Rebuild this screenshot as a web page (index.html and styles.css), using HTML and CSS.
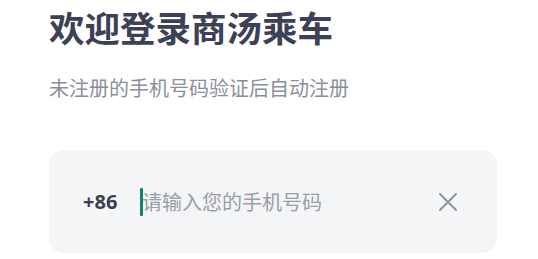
FILE: index.html
```html
<!DOCTYPE html>
<html lang="zh-CN">
<head>
<meta charset="utf-8">
<link rel="stylesheet" href="styles.css">
</head>
<body>
<main class="page">
  <h1 class="title">欢迎登录商汤乘车</h1>
  <p class="subtitle">未注册的手机号码验证后自动注册</p>
  <div class="phone-field">
    <span class="code">+86</span>
    <span class="caret"></span>
    <span class="placeholder">请输入您的手机号码</span>
    <svg class="clear" viewBox="0 0 18 18" width="18" height="18" aria-hidden="true">
      <path d="M1 1 L17 17 M17 1 L1 17" stroke="#8f949c" stroke-width="2" stroke-linecap="round" fill="none"/>
    </svg>
  </div>
</main>
</body>
</html>
```

FILE: styles.css
```css
html, body {
  margin: 0;
  padding: 0;
  background: #ffffff;
}
.page {
  width: 538px;
  height: 259px;
  box-sizing: border-box;
  padding: 9px 41px 0 49px;
  display: flex;
  flex-direction: column;
  font-family: "Noto Sans CJK SC", "Noto Sans", sans-serif;
}
.title {
  margin: 0;
  font-size: 35.5px;
  line-height: 36px;
  font-weight: 700;
  color: #3d4155;
  letter-spacing: 0;
}
.subtitle {
  margin: 33px 0 0;
  font-size: 20px;
  line-height: 20px;
  font-weight: 400;
  color: #8b8f99;
}
.phone-field {
  margin-top: 52px;
  height: 103px;
  border-radius: 15px;
  background: #f4f5f7;
  display: flex;
  align-items: center;
  padding: 0 40px 0 34px;
}
.code {
  font-family: "Noto Sans", sans-serif;
  font-size: 20px;
  font-weight: 700;
  color: #3a3e50;
  width: 57px;
}
.caret {
  width: 3px;
  height: 28px;
  background: #177f6f;
  border-radius: 1px;
}
.placeholder {
  flex: 1;
  font-size: 20px;
  line-height: 28px;
  color: #9a9ea6;
  margin-left: -1px;
}
.clear {
  display: block;
}
```
